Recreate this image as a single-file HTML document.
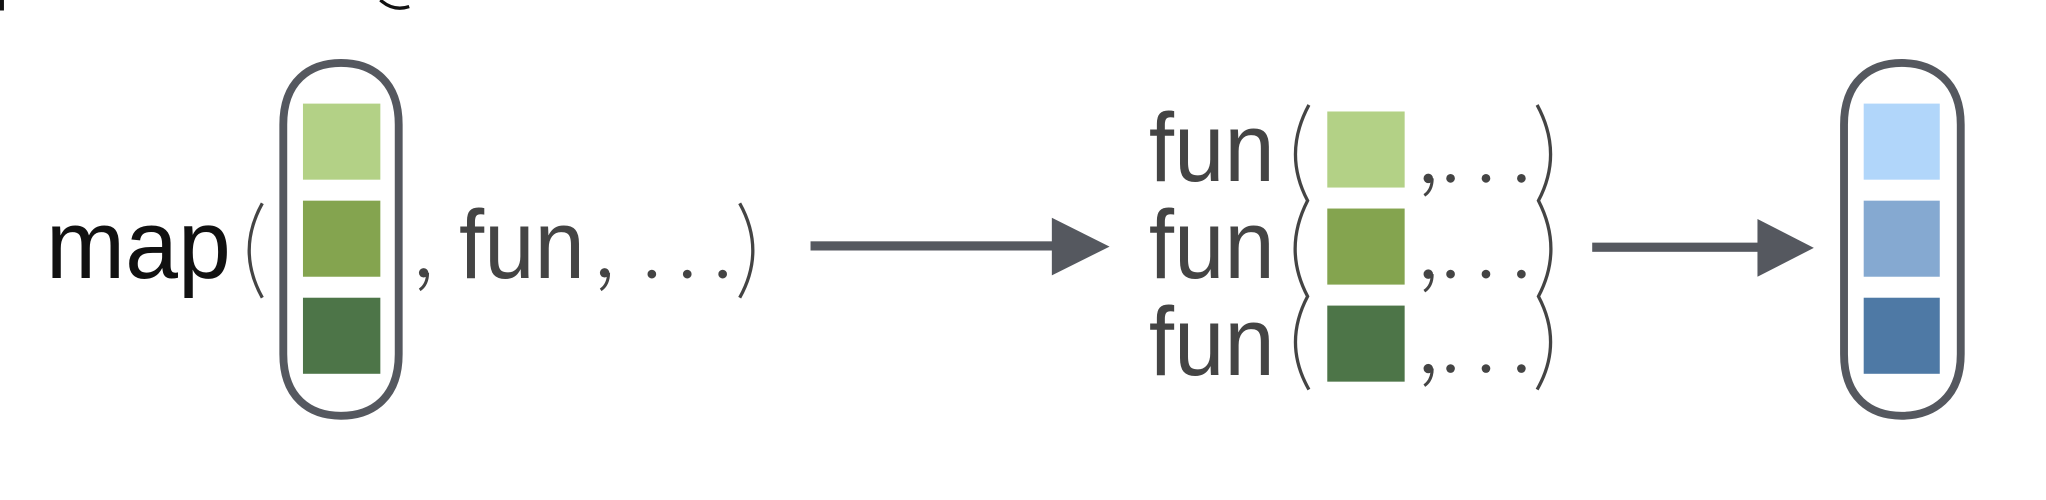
<!DOCTYPE html>
<html><head><style>html,body{margin:0;padding:0;background:#fff;width:2046px;height:500px;overflow:hidden}</style></head>
<body>
<svg width="2046" height="500" viewBox="0 0 1560 381.23" xmlns="http://www.w3.org/2000/svg" font-family="Liberation Sans, sans-serif">
<defs>
<g id="cm"><circle cx="0" cy="0" r="3.6" fill="#444"/><path d="M3,0 Q3,9 -3,13" fill="none" stroke="#444" stroke-width="2.3"/></g>
</defs>
<rect x="0" y="0" width="3" height="8" fill="#111"/>
<path d="M290,0 Q300,9 312,5" fill="none" stroke="#111" stroke-width="2.5"/>
<!-- left capsule -->
<path d="M216,270 L216,95 C216,62 236,48 260,48 C284,48 304,62 304,95 L304,270 C304,303 284,317 260,317 C236,317 216,303 216,270Z" fill="none" stroke="#55585f" stroke-width="6"/>
<rect x="231" y="79" width="59" height="58" fill="#b3d186"/>
<rect x="231" y="153" width="59" height="58" fill="#84a44f"/>
<rect x="231" y="227" width="59" height="58" fill="#4d7548"/>
<text x="35" y="212" font-size="74" fill="#111" textLength="141" lengthAdjust="spacingAndGlyphs">map</text>
<path d="M200,155 Q180,191 200,227" fill="none" stroke="#444" stroke-width="2.5"/>
<use href="#cm" x="323" y="208"/>
<text x="350" y="212" font-size="74" fill="#444" textLength="96" lengthAdjust="spacingAndGlyphs">fun</text>
<use href="#cm" x="461" y="208"/>
<circle cx="497" cy="209" r="3.3" fill="#444"/><circle cx="524" cy="209" r="3.3" fill="#444"/><circle cx="551" cy="209" r="3.3" fill="#444"/>
<path d="M564,155 Q584,191 564,227" fill="none" stroke="#444" stroke-width="2.5"/>
<!-- arrow1 -->
<rect x="618" y="184" width="188" height="7" fill="#55585f"/>
<polygon points="802,166 846,188 802,210" fill="#55585f"/>
<!-- fun rows -->
<g font-size="74" fill="#444">
<text x="876" y="138" textLength="96" lengthAdjust="spacingAndGlyphs">fun</text>
<text x="876" y="212" textLength="96" lengthAdjust="spacingAndGlyphs">fun</text>
<text x="876" y="286" textLength="96" lengthAdjust="spacingAndGlyphs">fun</text>
</g>
<use href="#cm" x="1089" y="136"/><use href="#cm" x="1089" y="209"/><use href="#cm" x="1089" y="281"/>
<path d="M998,80 Q978,117 997,153 Q978,190 997,226 Q978,262 998,297" fill="none" stroke="#444" stroke-width="2.5"/>
<path d="M1172,80 Q1192,117 1173,153 Q1192,190 1173,226 Q1192,262 1172,297" fill="none" stroke="#444" stroke-width="2.5"/>
<g fill="#444">
<circle cx="1106" cy="136" r="3.3"/><circle cx="1133" cy="136" r="3.3"/><circle cx="1160" cy="136" r="3.3"/>
<circle cx="1106" cy="209" r="3.3"/><circle cx="1133" cy="209" r="3.3"/><circle cx="1160" cy="209" r="3.3"/>
<circle cx="1106" cy="281" r="3.3"/><circle cx="1133" cy="281" r="3.3"/><circle cx="1160" cy="281" r="3.3"/>
</g>
<rect x="1012" y="85" width="59" height="58" fill="#b3d186"/>
<rect x="1012" y="159" width="59" height="58" fill="#84a44f"/>
<rect x="1012" y="233" width="59" height="58" fill="#4d7548"/>
<!-- arrow2 -->
<rect x="1214" y="185" width="128" height="7" fill="#55585f"/>
<polygon points="1340,167 1383,189 1340,211" fill="#55585f"/>
<!-- right capsule -->
<path d="M1406,270 L1406,95 C1406,62 1426,48 1450,48 C1474,48 1495,62 1495,95 L1495,270 C1495,303 1474,317 1450,317 C1426,317 1406,303 1406,270Z" fill="none" stroke="#55585f" stroke-width="6"/>
<rect x="1421" y="79" width="58" height="58" fill="#b1d6fa"/>
<rect x="1421" y="153" width="58" height="58" fill="#85a9d1"/>
<rect x="1421" y="227" width="58" height="58" fill="#4e79a5"/>
</svg>
</body></html>
